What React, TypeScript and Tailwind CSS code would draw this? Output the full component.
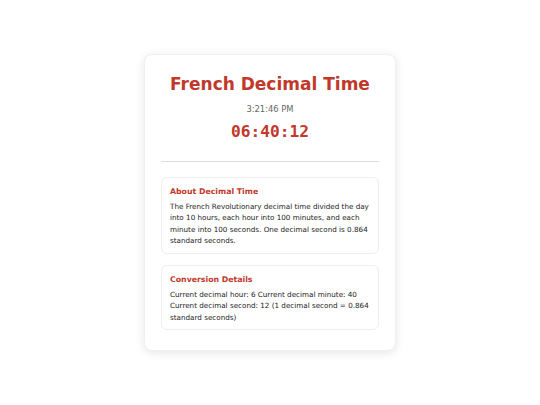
export default function App() {
  return (
    <div
      className="min-h-[405px] w-full bg-white flex items-center justify-center"
      style={{ fontFamily: '"DejaVu Sans", Verdana, sans-serif' }}
    >
      <div className="w-[252px] bg-white rounded-lg shadow-[0_2px_10px_rgba(0,0,0,0.1)] border border-[#f0f0f0] px-4 pt-4 pb-[20px]">
        <div className="text-center">
          <h1 className="text-[17px] leading-[26px] font-bold text-[#c0392b]">French Decimal Time</h1>
          <div className="text-[8.4px] leading-[10px] text-[#666] mt-[7px]">3:21:46 PM</div>
          <div
            className="text-[16.2px] leading-[20px] font-bold text-[#c0392b] mt-[8px]"
            style={{ fontFamily: '"DejaVu Sans Mono", monospace' }}
          >
            06:40:12
          </div>
        </div>
        <div className="h-px bg-[#ddd] mt-[19px]" />
        <div className="mt-[15px] border border-[#eee] rounded-md px-[8px] pt-[9px] pb-[6px]">
          <h2 className="text-[7.8px] leading-[10px] font-bold text-[#c0392b]">About Decimal Time</h2>
          <p className="text-[7.2px] leading-[11.5px] text-[#222] mt-[4px]">
            The French Revolutionary decimal time divided the day into 10 hours, each hour into 100 minutes, and each minute into 100 seconds. One decimal second is 0.864 standard seconds.
          </p>
        </div>
        <div className="mt-[11px] border border-[#eee] rounded-md px-[8px] pt-[9px] pb-[6px]">
          <h2 className="text-[7.8px] leading-[10px] font-bold text-[#c0392b]">Conversion Details</h2>
          <p className="text-[7.2px] leading-[11.5px] text-[#222] mt-[4px]">
            Current decimal hour: 6 Current decimal minute: 40 Current decimal second: 12 (1 decimal second = 0.864 standard seconds)
          </p>
        </div>
      </div>
    </div>
  );
}
